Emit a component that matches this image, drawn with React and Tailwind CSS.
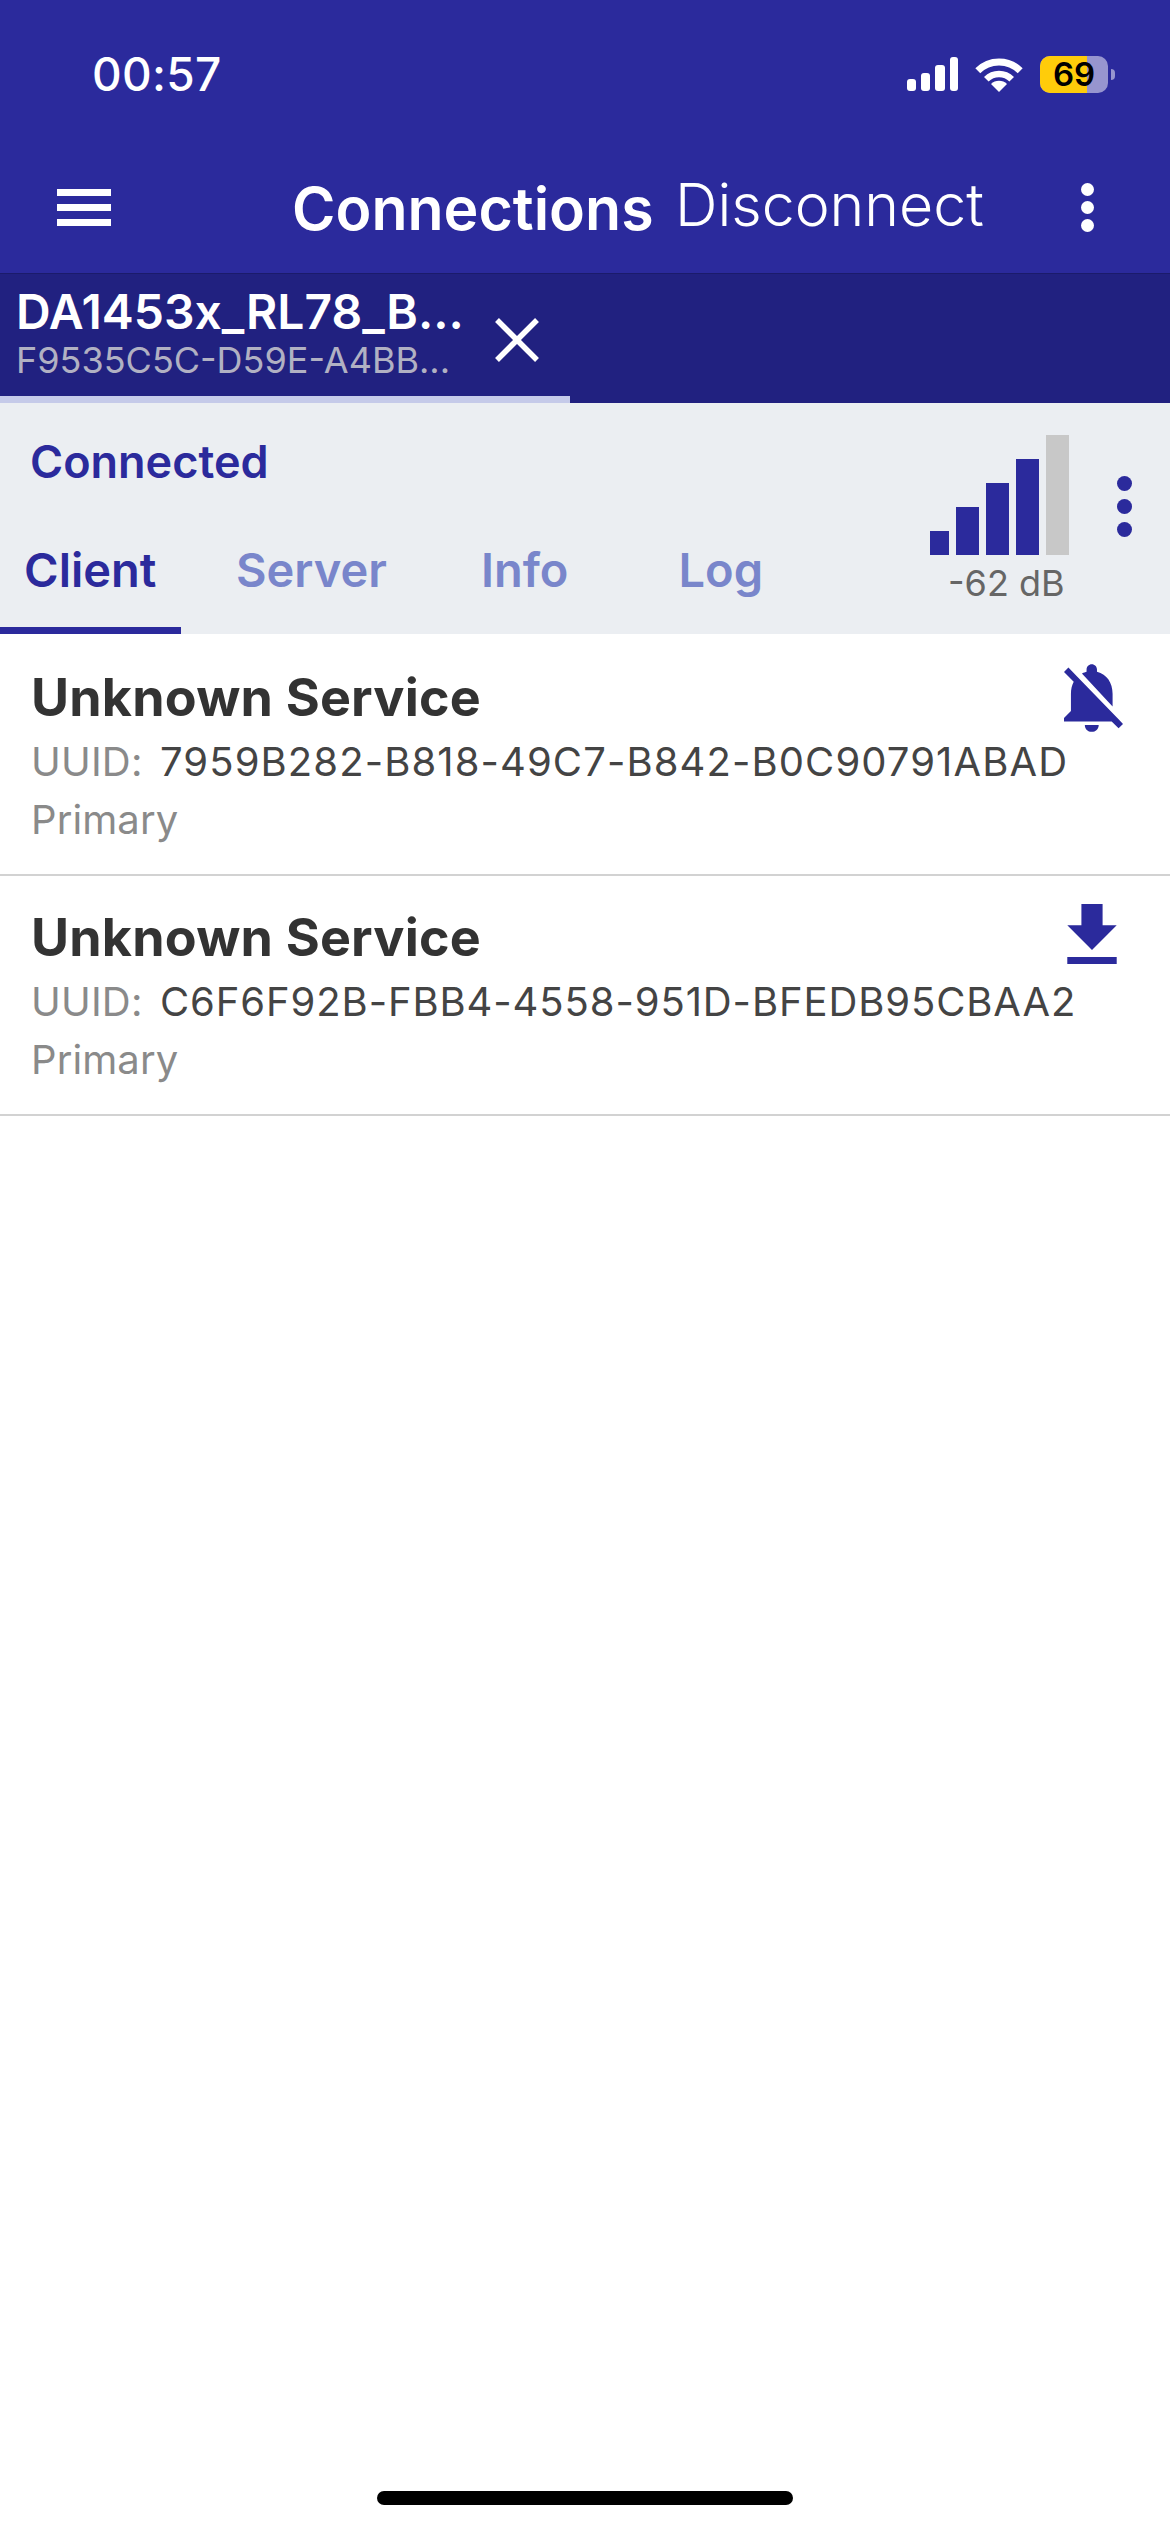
import React from "react";

function Dots({ cls, size, gap }) {
  return (
    <div className={`flex flex-col ${gap}`}>
      <div className={`${size} ${cls} rounded-full`} />
      <div className={`${size} ${cls} rounded-full`} />
      <div className={`${size} ${cls} rounded-full`} />
    </div>
  );
}

function ServiceRow({ uuid, icon, topPad, uuidH, primaryH, height, track }) {
  return (
    <div className={`${height} ${topPad} pl-[31px] border-b-2 border-[#d2d2d2] flex flex-col`}>
      <div className="h-[64px] flex items-center justify-between">
        <span className="text-[52px] font-bold text-[#333333] tracking-[0.2px]">Unknown Service</span>
        {icon}
      </div>
      <div className={`${uuidH} flex items-center text-[40px] whitespace-nowrap`}>
        <span className="text-[#8a8a8a] w-[129px] tracking-[0.2px]">UUID:</span>
        <span className={`text-[#444444] ${track}`}>{uuid}</span>
      </div>
      <div className={`${primaryH} flex items-center text-[40px] text-[#8a8a8a] tracking-[0.1px]`}>Primary</div>
    </div>
  );
}

export default function App() {
  return (
    <div className="w-[1170px] h-[2532px] bg-white flex flex-col overflow-hidden relative font-[family-name:Inter,sans-serif]">
      <div className="h-[273px] bg-[#2b2a9c] flex flex-col">
        <div className="h-[148px] flex items-center text-white">
          <span className="ml-[92px] text-[46px] font-medium leading-none w-[815px] tracking-[0.3px]">00:57</span>
          <div className="flex items-end gap-[5px] h-[34px] w-[51px]">
            <div className="w-[9px] h-[12px] bg-white rounded-[3px]" />
            <div className="w-[9px] h-[18px] bg-white rounded-[3px]" />
            <div className="w-[10px] h-[26px] bg-white rounded-[3px]" />
            <div className="w-[8px] h-[34px] bg-white rounded-[3px]" />
          </div>
          <svg className="ml-[17px]" width="48" height="35" viewBox="0 0 48 35" fill="none">
            <path d="M2.8 13.8 A30 30 0 0 1 45.2 13.8" stroke="#fff" strokeWidth="7" />
            <path d="M11.3 22.3 A18 18 0 0 1 36.7 22.3" stroke="#fff" strokeWidth="6.5" />
            <path d="M24 35 L16 27 A11.3 11.3 0 0 1 32 27 Z" fill="#fff" />
          </svg>
          <div className="ml-[17px] w-[68px] h-[37px] rounded-[10px] bg-[#9795cf] relative">
            <div className="w-[47px] h-full bg-[#ffcc0a] rounded-l-[10px]" />
            <span className="absolute inset-0 flex items-center justify-center text-black text-[33px] font-semibold leading-none">69</span>
          </div>
          <div className="ml-[3px] w-[4px] h-[11px] bg-[#9795cf] rounded-r-[4px]" />
        </div>
        <div className="h-[125px] flex items-center text-white pb-[4px]">
          <div className="ml-[57px] w-[54px] flex flex-col gap-[8px] -mt-[2px]">
            <div className="h-[7px] bg-white" />
            <div className="h-[7px] bg-white" />
            <div className="h-[7px] bg-white" />
          </div>
          <span className="ml-[181px] w-[362px] text-[59px] font-semibold whitespace-nowrap leading-none tracking-[0px] mt-[-1px]">Connections</span>
          <span className="ml-[21px] w-[308px] text-[59px] font-light whitespace-nowrap leading-none -mt-[9px]">Disconnect</span>
          <div className="ml-[98px] -mt-[2px]">
            <Dots cls="bg-white" size="w-[13px] h-[13px]" gap="gap-[5px]" />
          </div>
        </div>
      </div>

      <div className="h-[130px] bg-[#212180] flex border-t border-[#1b1b6b]">
        <div className="w-[570px] h-full border-b-[7px] border-[#c5cae9] flex">
          <div className="w-[495px] pl-[16px] flex flex-col">
            <span className="h-[68px] flex items-center text-white text-[48px] font-semibold whitespace-nowrap pt-[8px]">DA1453x_RL78_B...</span>
            <span className="h-[36px] flex items-center text-[#b1b1c3] text-[36px] whitespace-nowrap">F9535C5C-D59E-A4BB...</span>
          </div>
          <svg className="mt-[44px]" width="44" height="44" viewBox="0 0 44 44" fill="none">
            <path d="M2 2 L42 42 M42 2 L2 42" stroke="#fff" strokeWidth="5.5" />
          </svg>
        </div>
      </div>

      <div className="h-[231px] bg-[#ebeef2] flex">
        <div className="w-[930px] flex flex-col justify-between">
          <div className="pl-[30px] pt-[36px] text-[45px] font-semibold text-[#2b2a9c] leading-[46px]">Connected</div>
          <div className="flex items-stretch h-[96px] text-[47px] font-semibold text-[#7986cb]">
            <div className="w-[181px] pl-[24px] pt-[4px] text-[#2b2a9c] border-b-[7px] border-[#2b2a9c] leading-[56px]">Client</div>
            <div className="ml-[55px] pt-[4px] leading-[56px]">Server</div>
            <div className="ml-[94px] pt-[4px] leading-[56px]">Info</div>
            <div className="ml-[110px] pt-[4px] leading-[56px]">Log</div>
          </div>
        </div>
        <div className="w-[139px] pt-[32px] flex flex-col">
          <div className="flex items-end h-[120px]">
            <div className="w-[19px] h-[24px] bg-[#2b2a9c]" />
            <div className="ml-[7px] w-[23px] h-[48px] bg-[#2b2a9c]" />
            <div className="ml-[7px] w-[23px] h-[72px] bg-[#2b2a9c]" />
            <div className="ml-[7px] w-[23px] h-[96px] bg-[#2b2a9c]" />
            <div className="ml-[7px] w-[23px] h-[120px] bg-[#c8c8c8]" />
          </div>
          <div className="pl-[18px] text-[36px] text-[#666666] leading-[56px] whitespace-nowrap">-62 dB</div>
        </div>
        <div className="ml-[48px] pt-[73px]">
          <Dots cls="bg-[#2b2a9c]" size="w-[15px] h-[15px]" gap="gap-[8px]" />
        </div>
      </div>

      <ServiceRow
        height="h-[242px]"
        topPad="pt-[32px]"
        uuidH="h-[64px]"
        primaryH="h-[52px]"
        track="tracking-[1.1px]"
        uuid="7959B282-B818-49C7-B842-B0C90791ABAD"
        icon={
          <svg className="mr-[47px]" width="59" height="68" viewBox="4 2.5 17 19.5" fill="#2b2a9c">
            <path d="M20 18.69L7.84 6.14 5.27 3.49 4 4.76l2.8 2.8v.01c-.52.99-.8 2.16-.8 3.42v5l-2 2v1h13.73l2 2L21 19.72l-1-1.03zM12 22c1.11 0 2-.89 2-2h-4c0 1.11.89 2 2 2zm6-7.32V11c0-3.08-1.64-5.64-4.5-6.32V4c0-.83-.67-1.5-1.5-1.5s-1.5.67-1.5 1.5v.68c-.15.03-.29.08-.42.12-.1.03-.2.07-.3.11h-.01c-.2.08-.4.17-.59.27-.01 0-.01 0-.02.01L18 14.68z" />
          </svg>
        }
      />
      <ServiceRow
        height="h-[240px]"
        topPad="pt-[30px]"
        uuidH="h-[64px]"
        primaryH="h-[52px]"
        track="tracking-[0.9px]"
        uuid="C6F6F92B-FBB4-4558-951D-BFEDB95CBAA2"
        icon={
          <svg className="mr-[53px] -mt-[8px]" width="50" height="60" viewBox="5 3 14 17" fill="#2b2a9c">
            <path d="M19 9h-4V3H9v6H5l7 7 7-7zM5 18v2h14v-2H5z" />
          </svg>
        }
      />

      <div className="flex-1 flex items-end justify-center pb-[27px]">
        <div className="w-[416px] h-[14px] rounded-full bg-black" />
      </div>
    </div>
  );
}
